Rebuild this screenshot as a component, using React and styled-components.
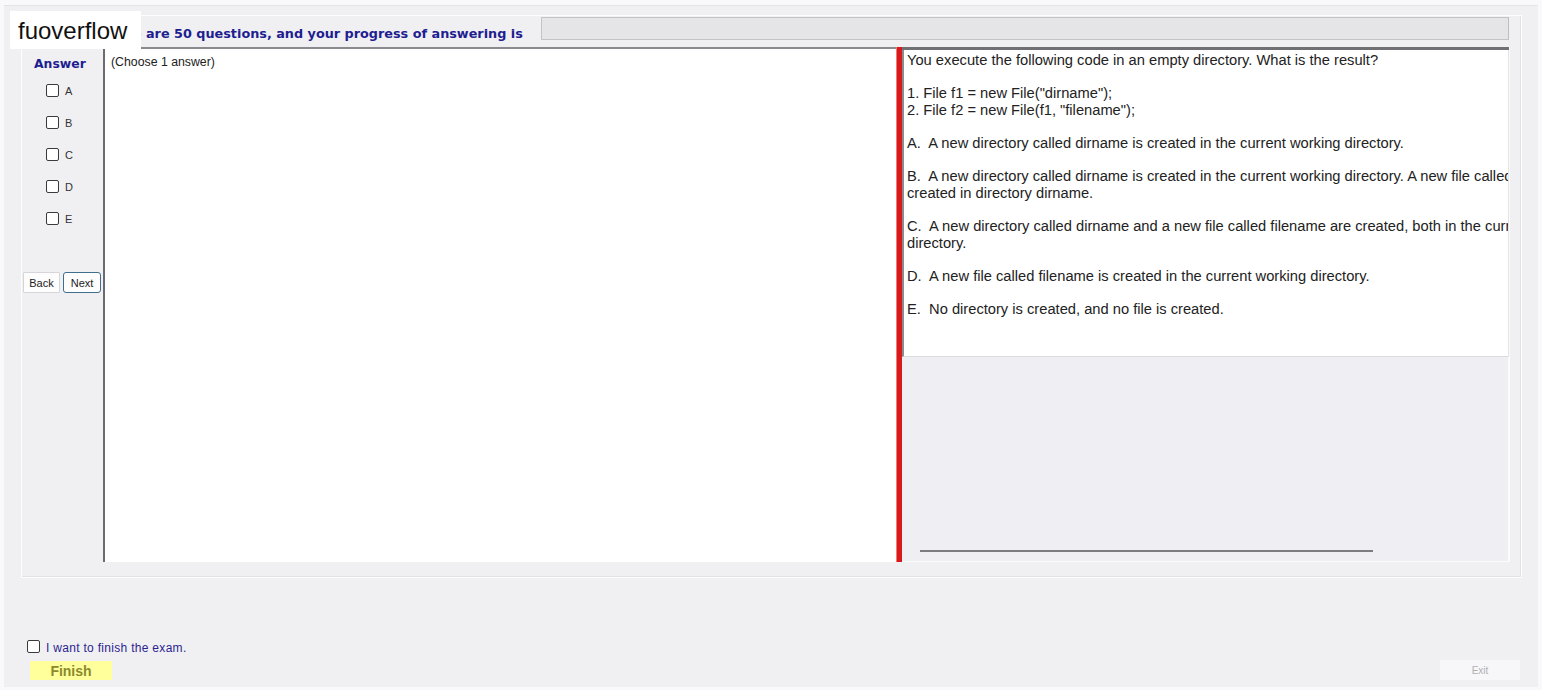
import styled, { createGlobalStyle } from "styled-components";

const GlobalStyle = createGlobalStyle`
  html, body {
    margin: 0;
    padding: 0;
    background: #f9f9fb;
    font-family: "Liberation Sans", Arial, sans-serif;
  }
`;

const Screen = styled.div`
  position: relative;
  width: 1534px;
  height: 682px;
  margin: 5px 0 0 4px;
  background: #f0f0f3;
  display: flex;
  flex-direction: column;
  padding: 9px 0 0 17px;
  box-sizing: border-box;
  border-top: 1px solid #e4e4e8;
`;

const Watermark = styled.div`
  position: absolute;
  left: 6px;
  top: 5px;
  width: 131px;
  height: 38px;
  background: #fff;
  color: #111;
  font-size: 24px;
  line-height: 40px;
  padding-left: 8px;
  box-sizing: border-box;
  z-index: 2;
`;

const ExamPanel = styled.div`
  width: 1501px;
  height: 563px;
  box-sizing: border-box;
  border: 1px solid #fdfdfd;
  box-shadow: inset -1px -1px 0 #e2e2e6;
  display: flex;
  flex-direction: column;
`;

const Header = styled.div`
  height: 31px;
  display: flex;
  align-items: flex-start;
  padding-top: 1px;
  box-sizing: border-box;
`;

const HeaderLabel = styled.div`
  width: 519px;
  padding: 9px 0 0 78px;
  box-sizing: border-box;
  font-family: "DejaVu Sans", Verdana, sans-serif;
  font-size: 12.8px;
  font-weight: bold;
  color: #1e1e90;
  white-space: nowrap;
  overflow: hidden;
`;

const Progress = styled.div`
  width: 968px;
  height: 23px;
  box-sizing: border-box;
  background: #e5e5e8;
  border: 1px solid #c4c4c8;
  border-right-color: #bdbdc1;
`;

const Body = styled.div`
  flex: 1;
  display: grid;
  grid-template-columns: 81px 793px 6px 607px 1fr;
  padding-bottom: 15px;
`;

const AnswerColumn = styled.div`
  display: flex;
  flex-direction: column;
  align-items: flex-start;
`;

const AnswerTitle = styled.div`
  font-family: "DejaVu Sans", Verdana, sans-serif;
  font-size: 12.4px;
  font-weight: bold;
  color: #1e1e90;
  padding: 9px 0 0 12px;
  height: 27px;
  box-sizing: border-box;
`;

const Options = styled.div`
  display: flex;
  flex-direction: column;
  gap: 19px;
  padding: 10px 0 0 24px;
`;

const Option = styled.label`
  display: flex;
  align-items: center;
  gap: 6px;
  height: 13px;
  font-size: 11px;
  color: #333;
`;

const Box = styled.span`
  display: inline-block;
  width: 11px;
  height: 11px;
  border: 1px solid #3a3a3a;
  border-radius: 2px;
  background: #fff;
`;

const NavRow = styled.div`
  display: flex;
  gap: 3px;
  margin: 47px 0 0 1px;
`;

const NavButton = styled.button`
  height: 21px;
  width: ${(p) => (p.$focus ? 38 : 37)}px;
  padding: 0;
  font-family: inherit;
  font-size: 11px;
  color: #222;
  background: #fdfdfd;
  border: 1px solid ${(p) => (p.$focus ? "#3f6f8c" : "#d6d6d9")};
  border-radius: ${(p) => (p.$focus ? 3 : 1)}px;
`;

const ChoicePane = styled.div`
  background: #fff;
  border-top: 2px solid #8a8a8e;
  border-left: 2px solid #6c6c70;
  padding: 6px 0 0 6px;
  font-size: 12.3px;
  color: #222;
`;

const Splitter = styled.div`
  background: #d91a1a;
  border-left: 1px solid #f07a7a;
`;

const QuestionPane = styled.div`
  display: flex;
  flex-direction: column;
  border-top: 3px solid #707074;
  overflow: hidden;
`;

const QuestionText = styled.div`
  height: 307px;
  box-sizing: border-box;
  background: #fff;
  border-left: 2px solid #8c8c90;
  border-right: 1px solid #e4e4e8;
  border-bottom: 1px solid #dcdce0;
  padding: 2px 0 0 3px;
  font-size: 14.7px;
  line-height: 16.6px;
  color: #222;
  white-space: pre;
  overflow: hidden;
`;

const ScrollArea = styled.div`
  flex: 1;
  display: flex;
  align-items: flex-end;
  padding: 0 0 9px 18px;
  background: #efeff3;
  border-right: 1px solid #fbfbfc;
  border-bottom: 1px solid #fbfbfc;
`;

const ScrollLine = styled.div`
  width: 453px;
  height: 2px;
  background: #7c7c80;
`;

const Gutter = styled.div`
  border-left: 1px solid #fbfbfc;
`;

const Footer = styled.div`
  flex: 1;
  display: flex;
  align-items: flex-end;
  justify-content: space-between;
  padding: 0 18px 7px 6px;
`;

const FinishGroup = styled.div`
  display: flex;
  flex-direction: column;
  gap: 5px;
`;

const FinishCheck = styled.label`
  display: flex;
  align-items: center;
  gap: 6px;
  font-size: 12px;
  line-height: 16px;
  color: #2d1f8f;
  letter-spacing: 0.3px;
`;

const FinishLabel = styled.span`
  padding-top: 3px;
`;

const FinishButton = styled.button`
  width: 82px;
  height: 19px;
  margin-left: 3px;
  padding: 0;
  border: none;
  background: #ffff9c;
  color: #8a8a2c;
  font-family: inherit;
  font-size: 14px;
  font-weight: bold;
`;

const ExitButton = styled.button`
  width: 80px;
  height: 20px;
  padding: 0;
  border: none;
  background: #f7f7f9;
  color: #b0b0b4;
  font-family: inherit;
  font-size: 10px;
`;

const options = ["A", "B", "C", "D", "E"];

const question = [
  "You execute the following code in an empty directory. What is the result?",
  "",
  '1. File f1 = new File("dirname");',
  '2. File f2 = new File(f1, "filename");',
  "",
  "A.  A new directory called dirname is created in the current working directory.",
  "",
  "B.  A new directory called dirname is created in the current working directory. A new file called filename is",
  "created in directory dirname.",
  "",
  "C.  A new directory called dirname and a new file called filename are created, both in the current working",
  "directory.",
  "",
  "D.  A new file called filename is created in the current working directory.",
  "",
  "E.  No directory is created, and no file is created.",
].join("\n");

export default function App() {
  return (
    <>
      <GlobalStyle />
      <Screen>
        <Watermark>fuoverflow</Watermark>
        <ExamPanel>
          <Header>
            <HeaderLabel>There are 50 questions, and your progress of answering is</HeaderLabel>
            <Progress />
          </Header>
          <Body>
            <AnswerColumn>
              <AnswerTitle>Answer</AnswerTitle>
              <Options>
                {options.map((o) => (
                  <Option key={o}>
                    <Box />
                    {o}
                  </Option>
                ))}
              </Options>
              <NavRow>
                <NavButton>Back</NavButton>
                <NavButton $focus>Next</NavButton>
              </NavRow>
            </AnswerColumn>
            <ChoicePane>(Choose 1 answer)</ChoicePane>
            <Splitter />
            <QuestionPane>
              <QuestionText>{question}</QuestionText>
              <ScrollArea>
                <ScrollLine />
              </ScrollArea>
            </QuestionPane>
            <Gutter />
          </Body>
        </ExamPanel>
        <Footer>
          <FinishGroup>
            <FinishCheck>
              <Box />
              <FinishLabel>I want to finish the exam.</FinishLabel>
            </FinishCheck>
            <FinishButton>Finish</FinishButton>
          </FinishGroup>
          <ExitButton>Exit</ExitButton>
        </Footer>
      </Screen>
    </>
  );
}
